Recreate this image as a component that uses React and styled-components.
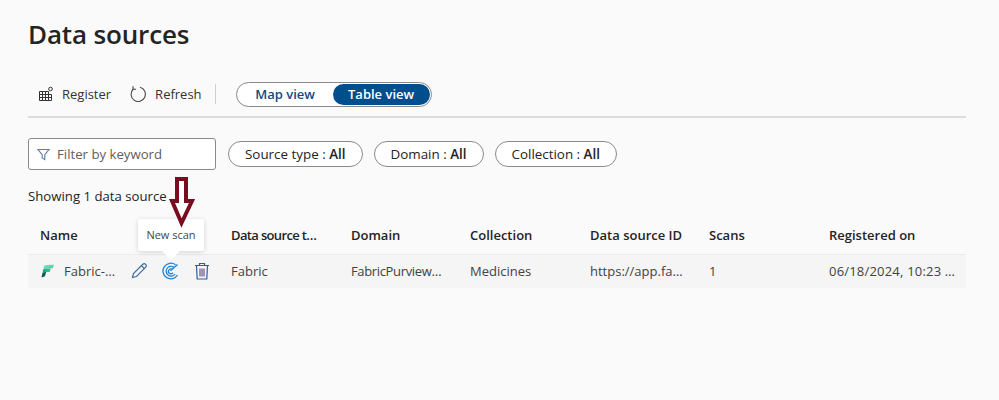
import React from "react"
import styled, { createGlobalStyle } from "styled-components"

const Global = createGlobalStyle`
  html, body {
    margin: 0;
    background: #fafafa;
    font-family: "Open Sans", "Liberation Sans", sans-serif;
    color: #242424;
  }
`

const Page = styled.div`
  width: 999px;
  height: 400px;
  box-sizing: border-box;
  padding: 17px 33px 0 28px;
  overflow: hidden;
`

const Title = styled.h1`
  margin: 0;
  font-size: 26px;
  line-height: 34px;
  font-weight: 600;
  letter-spacing: -0.15px;
`

// toolbar
const Toolbar = styled.div`
  display: flex;
  align-items: center;
  height: 36px;
  margin-top: 25px;
  padding-left: 10px;
  padding-bottom: 4px;
  border-bottom: 2px solid #dcdcdc;
  box-sizing: content-box;
`

const ToolButton = styled.div`
  display: flex;
  align-items: center;
  gap: 8px;
  font-size: 13px;
  margin-right: 18px;
  color: #333;
`

const Divider = styled.div`
  width: 1px;
  height: 20px;
  background: #d0d0d0;
  margin: 0 20px 0 -5px;
`

const ViewSwitch = styled.div`
  display: flex;
  align-items: center;
  width: 196px;
  height: 25px;
  box-sizing: border-box;
  border: 1px solid #8a8a8a;
  border-radius: 13px;
  background: #fff;
  padding: 1px;
`

const ViewOption = styled.div`
  flex: ${p => (p.$active ? "0 0 97px" : "1")};
  height: 100%;
  display: flex;
  align-items: center;
  justify-content: center;
  border-radius: 11px;
  font-size: 13px;
  font-weight: 600;
  color: ${p => (p.$active ? "#fff" : "#0f4a84")};
  background: ${p => (p.$active ? "#004e8c" : "transparent")};
`

// filters
const Filters = styled.div`
  display: flex;
  align-items: center;
  gap: 11px;
  margin-top: 20px;
`

const Search = styled.div`
  width: 188px;
  height: 32px;
  box-sizing: border-box;
  border: 1px solid #8a8a8a;
  border-radius: 3px;
  background: #fff;
  display: flex;
  align-items: center;
  gap: 7px;
  padding-left: 8px;
  font-size: 13.2px;
  color: #605e5c;
  margin-right: 1px;
`

const Pill = styled.div`
  height: 26px;
  box-sizing: border-box;
  padding: 0 16px;
  border: 1px solid #8a8a8a;
  border-radius: 13px;
  background: #fff;
  display: flex;
  align-items: center;
  font-size: 13.4px;
  white-space: pre;
  b { font-weight: 600; }
`

const Showing = styled.div`
  margin-top: 17px;
  font-size: 13.2px;
  line-height: 18px;
`

// table
const Table = styled.div`
  margin-top: 13px;
`

const Row = styled.div`
  display: grid;
  grid-template-columns: 191px 120px 119px 120px 119px 120px 149px;
  align-items: center;
  height: ${p => (p.$head ? "36px" : "34px")};
  padding: ${p => (p.$head ? "0 0 2px 12px" : "0 0 2px 12px")};
  font-size: 13px;
  font-weight: ${p => (p.$head ? 600 : 400)};
  background: ${p => (p.$head ? "transparent" : "#f5f5f5")};
  border-top: ${p => (p.$head ? "none" : "1px solid #ececec")};
  box-sizing: border-box;
  color: ${p => (p.$head ? "#242424" : "#424242")};
`

// truncated cell text, spacing differs per column
const Clipped = styled.div`
  letter-spacing: ${p => p.$spacing || 0}px;
  white-space: nowrap;
`

const NameCell = styled.div`
  position: relative;
  display: flex;
  align-items: center;
`

const NameText = styled.span`
  margin-left: 10px;
  width: 60px;
`

const Actions = styled.div`
  display: flex;
  align-items: center;
  gap: 13px;
  margin-left: 6px;
`

const Tooltip = styled.div`
  position: absolute;
  left: 98px;
  top: -43px;
  width: 66px;
  height: 32px;
  background: #fff;
  border-radius: 2px;
  box-shadow: 0 1px 5px rgba(0, 0, 0, 0.16);
  display: flex;
  align-items: center;
  justify-content: center;
  font-size: 11px;
  color: #444;
  &::after {
    content: "";
    position: absolute;
    left: 26px;
    bottom: -6px;
    width: 14px;
    height: 14px;
    background: #fff;
    transform: rotate(45deg);
  }
`

const Arrow = styled.svg`
  position: absolute;
  left: 129px;
  top: -86px;
`

const RegisterIcon = () => (
  <svg width="16" height="16" viewBox="0 0 16 16" fill="none" stroke="#333" strokeWidth="1">
    <path d="M1.500 5.500h9M1.500 5.500v9h12v-6M1.500 8.500h12M1.500 11.500h12M4.500 5.500v9M7.500 5.500v9M10.500 5.500v9" />
    <circle cx="12.500" cy="3" r="1.800" />
  </svg>
)

const RefreshIcon = () => (
  <svg width="18" height="18" viewBox="0 0 18 18" fill="none" stroke="#444" strokeWidth="1.100">
    <path d="M11 2.300a7.200 7.200 0 1 1-6.600 1.700" />
    <path d="M4 1.300v3h3" />
  </svg>
)

const FilterIcon = () => (
  <svg width="13" height="13" viewBox="0 0 13 13" fill="none" stroke="#5b7fa6" strokeWidth="1.100">
    <path d="M1 1.500h11L7.800 6.600v5L5.200 10V6.600z" />
  </svg>
)

const FabricIcon = () => (
  <svg width="14" height="14" viewBox="0 0 14 14">
    <defs>
      <linearGradient id="fabTop" x1="0" y1="0" x2="1" y2="1">
        <stop offset="0" stopColor="#7fe8c4" />
        <stop offset="1" stopColor="#35c9a0" />
      </linearGradient>
      <linearGradient id="fabMid" x1="0" y1="0" x2="1" y2="0">
        <stop offset="0" stopColor="#1e9c80" />
        <stop offset="1" stopColor="#3ecba4" />
      </linearGradient>
    </defs>
    <path d="M4 1.500C7 .6 10.500.5 14 .8l-1.500 3.700c-3-.4-6-.1-9 .8z" fill="url(#fabTop)" />
    <path d="M3 5.500c2.500-.9 5-1.200 8-.8l-1.300 3.300c-2.500-.3-4.500 0-6.900.8z" fill="url(#fabMid)" />
    <path d="M2.500 8.800c1-.5 2.300-.8 3.700-.9l-1 3.700c-.5 1.300-2.500 2-3.700 1.600z" fill="#0b5e55" />
  </svg>
)

const EditIcon = () => (
  <svg width="18" height="18" viewBox="0 0 18 18" fill="none" stroke="#3f6f9f" strokeWidth="1.200">
    <path d="M2.500 15.500l1-4L12.800 2.300a1.500 1.500 0 0 1 2.900 2.900L6.500 14.500z" />
    <path d="M11.500 3.700l2.800 2.800" />
  </svg>
)

const ScanIcon = () => (
  <svg width="18" height="18" viewBox="0 0 18 18" fill="none" stroke="#1f7fd0" strokeWidth="1.300">
    <path d="M14.500 2.800A7.800 7.800 0 1 0 16.500 13" />
    <path d="M12.800 5.200a4.900 4.900 0 1 0 1.300 6.800" />
    <path d="M11 7.300a2.400 2.400 0 1 0 .9 3.300" />
    <path d="M9.500 8.800L16.500 2.500" />
  </svg>
)

const TrashIcon = () => (
  <svg width="18" height="18" viewBox="-2 0 18 18" fill="none" stroke="#27609c" strokeWidth="1.200">
    <path d="M1 3.500h14M5.500 3.500V1.500h5v2M2.500 3.500l.7 13.500h9.600l.7-13.500" />
    <path d="M6 6.500v8M8 6.500v8M10 6.500v8" stroke="#6a4f9c" />
  </svg>
)

const App = () => {
  return (
    <Page>
      <Global />
      <Title>Data sources</Title>
      <Toolbar>
        <ToolButton><RegisterIcon />Register</ToolButton>
        <ToolButton><RefreshIcon />Refresh</ToolButton>
        <Divider />
        <ViewSwitch>
          <ViewOption>Map view</ViewOption>
          <ViewOption $active>Table view</ViewOption>
        </ViewSwitch>
      </Toolbar>
      <Filters>
        <Search><FilterIcon />Filter by keyword</Search>
        <Pill>Source type : <b>All</b></Pill>
        <Pill>Domain : <b>All</b></Pill>
        <Pill>Collection : <b>All</b></Pill>
      </Filters>
      <Showing>Showing 1 data source</Showing>
      <Table>
        <Row $head>
          <div>Name</div>
          <Clipped $spacing={-0.65}>Data source t…</Clipped>
          <div>Domain</div>
          <div>Collection</div>
          <div>Data source ID</div>
          <div>Scans</div>
          <div>Registered on</div>
        </Row>
        <Row>
          <NameCell>
            <FabricIcon />
            <NameText>Fabric-…</NameText>
            <Actions>
              <EditIcon />
              <ScanIcon />
              <TrashIcon />
            </Actions>
            <Tooltip>New scan</Tooltip>
            <Arrow width="26" height="52" viewBox="0 0 26 52">
              <path d="M8 3h9v22h6L12.500 47 3 25h5z" fill="#fff" stroke="#7a0c20" strokeWidth="4" />
            </Arrow>
          </NameCell>
          <div>Fabric</div>
          <Clipped $spacing={-0.35}>FabricPurview…</Clipped>
          <div>Medicines</div>
          <div>https://app.fa…</div>
          <div>1</div>
          <Clipped $spacing={0.2}>06/18/2024, 10:23 …</Clipped>
        </Row>
      </Table>
    </Page>
  )
}

export default App
